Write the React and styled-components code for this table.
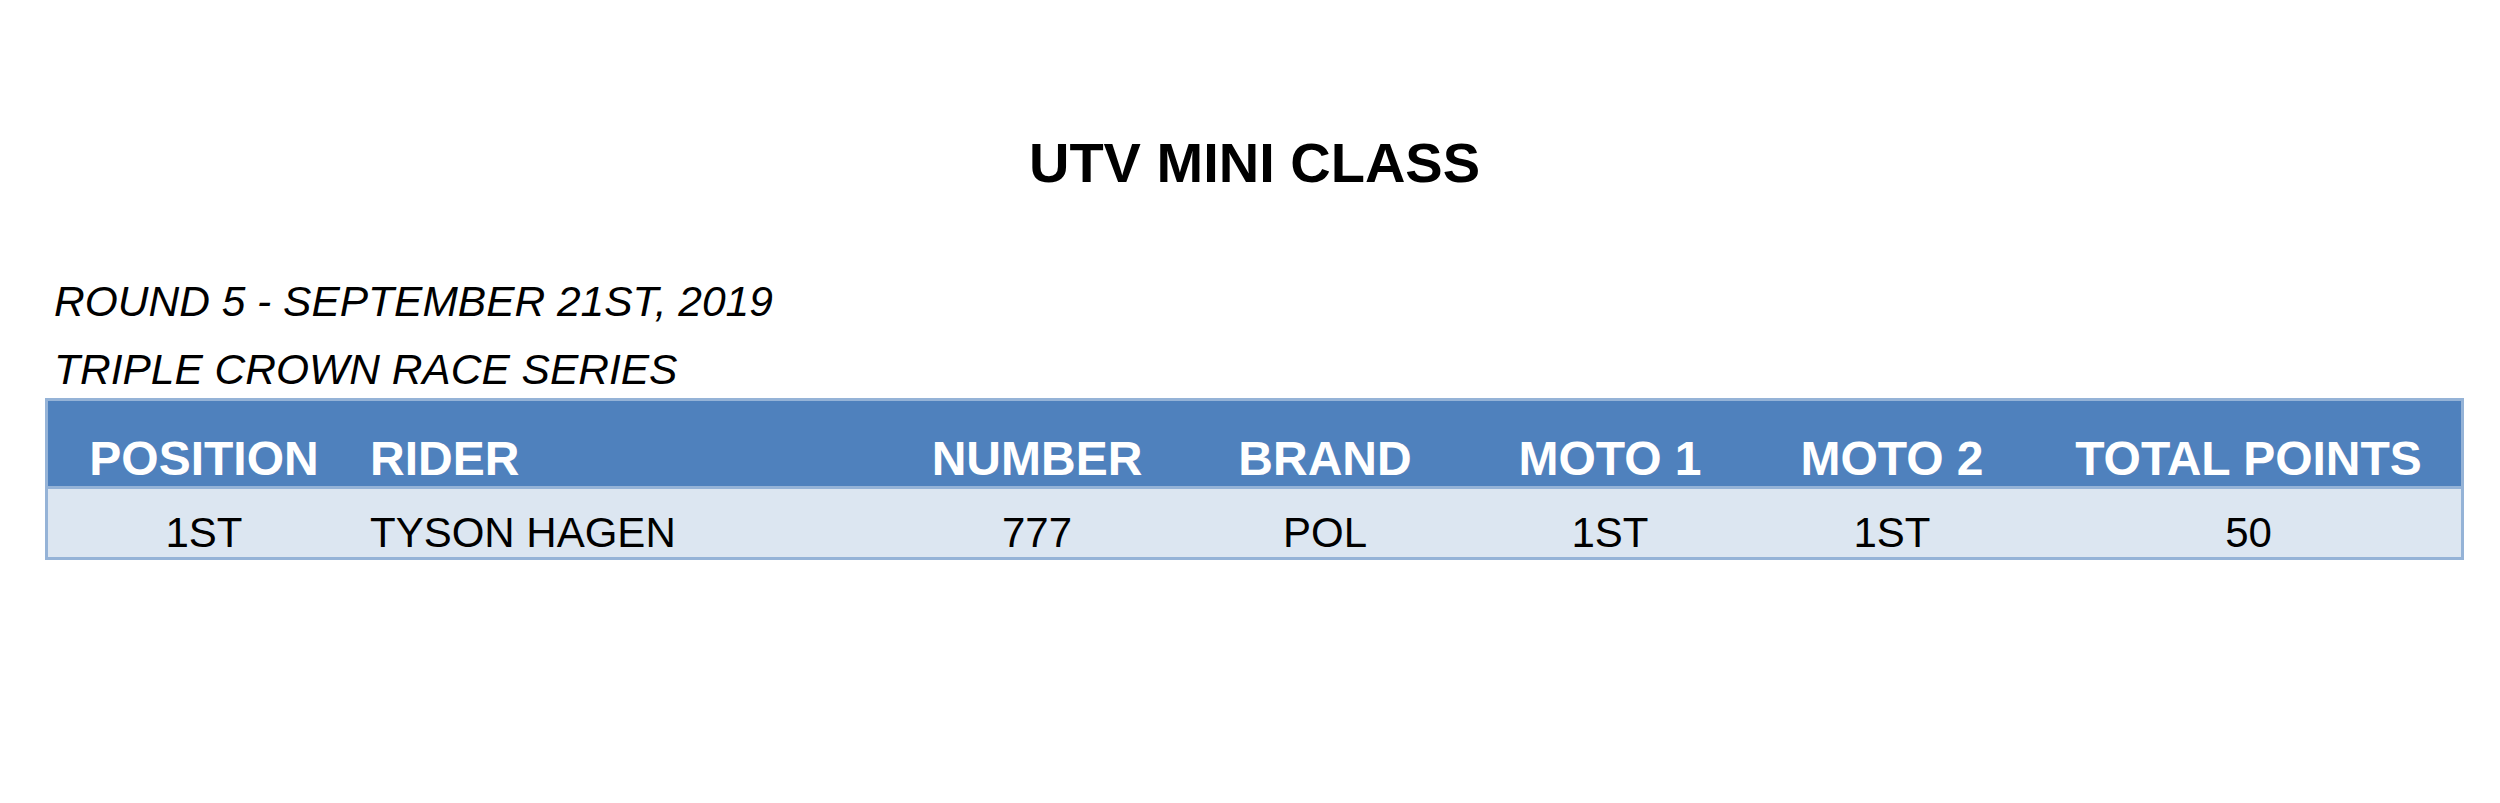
import React from 'react';
import styled, { createGlobalStyle } from 'styled-components';

const GlobalStyle = createGlobalStyle`
    body {
        margin: 0;
        background: #ffffff;
        font-family: "Liberation Sans", Arial, sans-serif;
    }
`;

const columns = '312px 536px 282px 294px 276px 288px 425px';

const Page = styled.div`
    width: 2419px;
    margin-left: 45px;
    padding-top: 131px;
`;

const Title = styled.h1`
    margin: 0;
    font-size: 56px;
    line-height: 64px;
    font-weight: bold;
    text-align: center;
    color: #000000;
`;

const SubTitles = styled.div`
    display: flex;
    flex-direction: column;
    gap: 16px;
    margin-top: 81px;
    padding-left: 9px;
`;

const SubTitle = styled.div`
    font-size: 42.5px;
    line-height: 52px;
    font-style: italic;
    color: #000000;
`;

const Table = styled.div`
    margin-top: 2px;
    border: 3px solid #95b3d7;
`;

const Row = styled.div`
    display: grid;
    grid-template-columns: ${columns};
    background: ${(p) => (p.$header ? '#4f81bd' : '#dce6f1')};
    color: ${(p) => (p.$header ? '#ffffff' : '#000000')};
    font-size: ${(p) => (p.$header ? '48px' : '42px')};
    font-weight: ${(p) => (p.$header ? 'bold' : 'normal')};
    line-height: ${(p) => (p.$header ? '55px' : '48px')};
    padding-top: ${(p) => (p.$header ? '30px' : '20px')};
    border-bottom: ${(p) => (p.$header ? '3px solid #95b3d7' : 'none')};
`;

const Cell = styled.div`
    text-align: ${(p) => (p.$left ? 'left' : 'center')};
    padding-left: ${(p) => (p.$left ? '10px' : '0')};
    white-space: nowrap;
`;

const headers = ['POSITION', 'RIDER', 'NUMBER', 'BRAND', 'MOTO 1', 'MOTO 2', 'TOTAL POINTS'];

const results = [
    ['1ST', 'TYSON HAGEN', '777', 'POL', '1ST', '1ST', '50'],
];

function App() {
    return (
        <>
            <GlobalStyle />
            <Page>
                <Title>UTV MINI CLASS</Title>
                <SubTitles>
                    <SubTitle>ROUND 5 - SEPTEMBER 21ST, 2019</SubTitle>
                    <SubTitle>TRIPLE CROWN RACE SERIES</SubTitle>
                </SubTitles>
                <Table>
                    <Row $header>
                        {headers.map((h, i) => (
                            <Cell key={h} $left={i === 1}>{h}</Cell>
                        ))}
                    </Row>
                    {results.map((r, idx) => (
                        <Row key={idx}>
                            {r.map((v, i) => (
                                <Cell key={i} $left={i === 1}>{v}</Cell>
                            ))}
                        </Row>
                    ))}
                </Table>
            </Page>
        </>
    );
}

export default App;
